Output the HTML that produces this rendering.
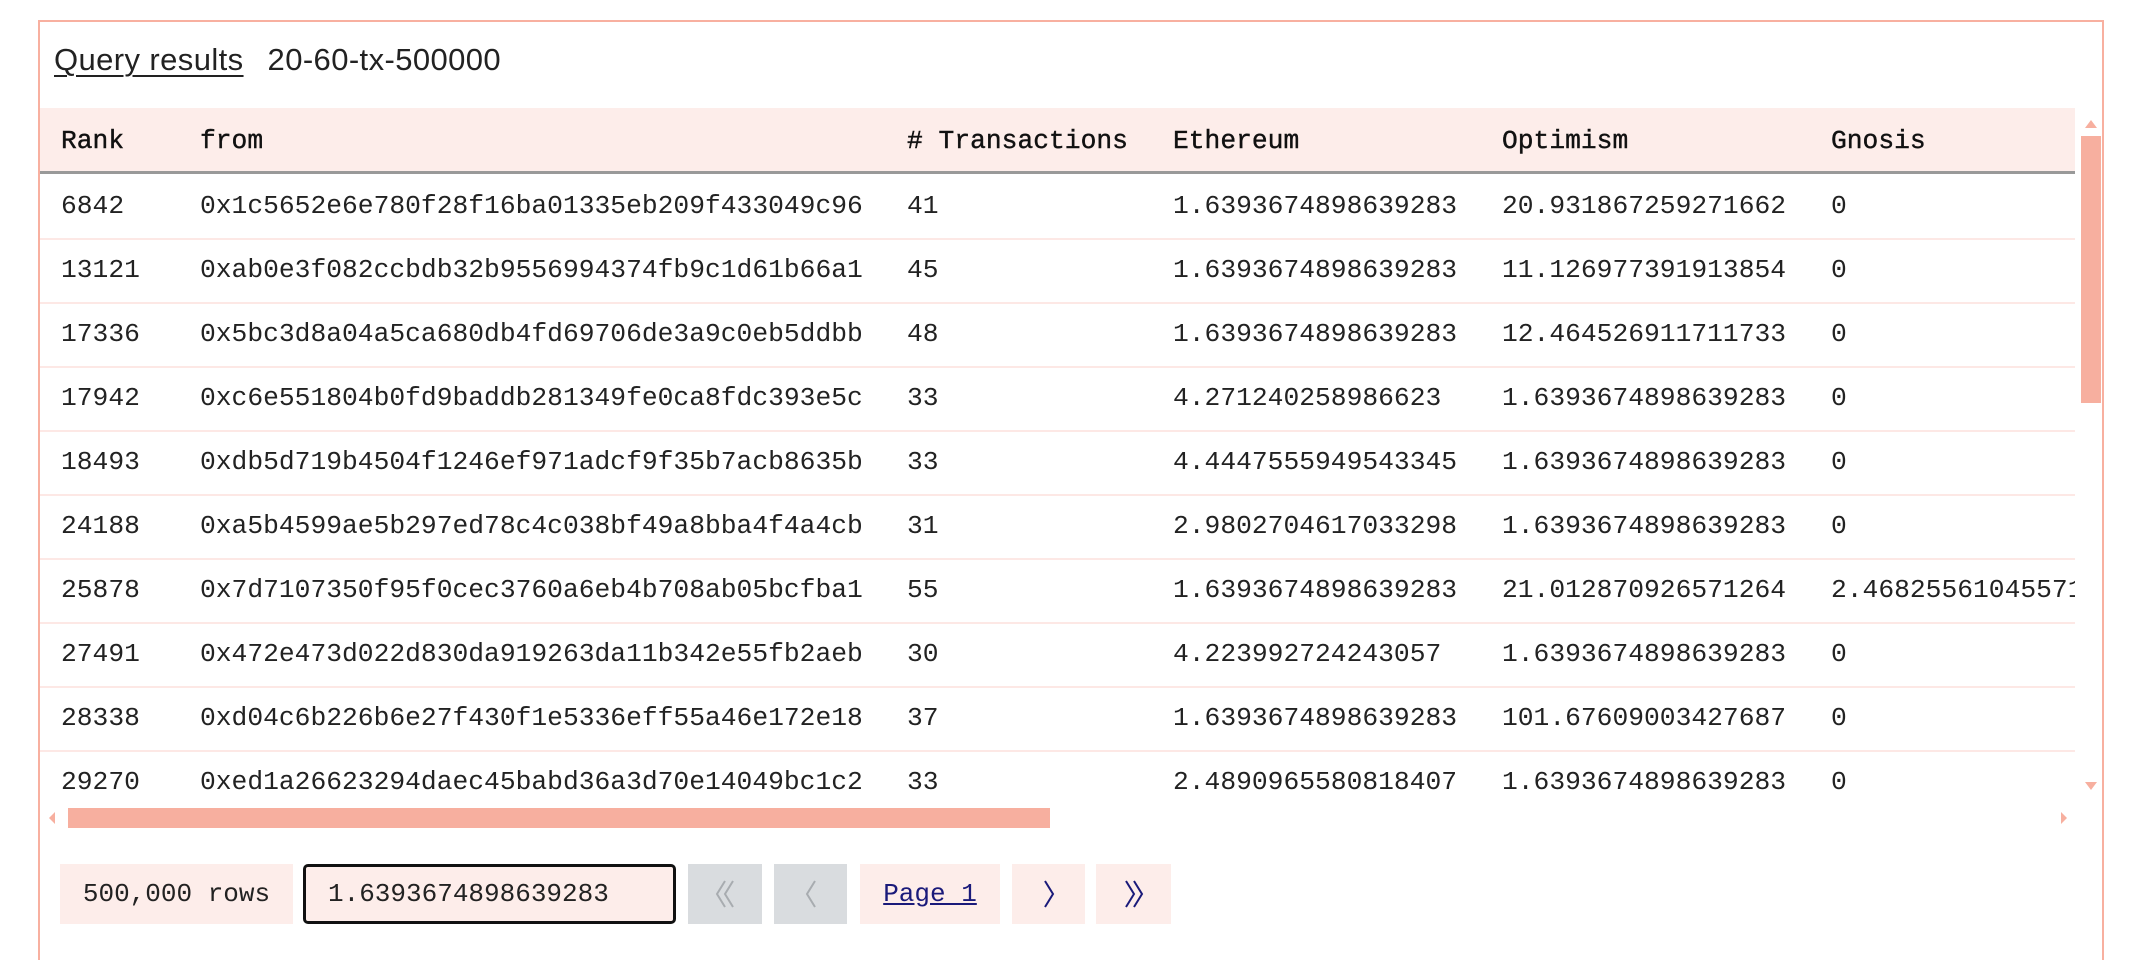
<!DOCTYPE html>
<html><head><meta charset="utf-8"><style>
*{margin:0;padding:0;box-sizing:border-box}
body{width:2129px;height:937px;background:#fff;position:relative;overflow:hidden;font-family:"Liberation Mono",monospace;color:#222}
.box{position:absolute;left:38px;top:20px;width:2066px;height:940px;border:2px solid #f8b0a0;border-bottom:none}
.title{position:absolute;left:54px;top:42px;font-family:"Liberation Sans",sans-serif;font-size:31px;color:#222;white-space:nowrap;letter-spacing:0.4px}
.title u{text-decoration-thickness:2px;text-underline-offset:5px;margin-right:24px}
.tbl{position:absolute;left:40px;top:108px;width:2035px;height:690px;overflow:hidden}
.hdr{position:absolute;left:0;top:0;width:2035px;height:66px;background:#fdedea;border-bottom:3px solid #999}
.row{position:absolute;left:0;width:2035px;height:64px;border-bottom:2px solid #fde8e5}
.c{position:absolute;font-size:26.3px;white-space:nowrap;line-height:64px;top:-2px}
.hdr .c{line-height:66px;top:0;color:#111;-webkit-text-stroke:0.4px #111}
.vs{position:absolute;left:2081px;top:136px;width:20px;height:267px;background:#f7af9f}
.hs{position:absolute;left:68px;top:808px;width:982px;height:20px;background:#f7af9f}
.tri{position:absolute;width:0;height:0}
.btn{position:absolute;top:864px;height:60px;background:#fdedea;font-size:26px;line-height:60px;text-align:center;color:#222}
.btn svg{position:absolute;left:50%;top:50%;transform:translate(-50%,-50%)}
</style></head><body>
<div class="box"></div>
<div class="title"><u>Query results</u>20-60-tx-500000</div>
<div class="tbl">
<div class="hdr">
<div class="c" style="left:21px">Rank</div><div class="c" style="left:160px">from</div><div class="c" style="left:867px"># Transactions</div><div class="c" style="left:1133px">Ethereum</div><div class="c" style="left:1462px">Optimism</div><div class="c" style="left:1791px">Gnosis</div>
</div>
<div class="row" style="top:68px"><div class="c" style="left:21px">6842</div><div class="c" style="left:160px">0x1c5652e6e780f28f16ba01335eb209f433049c96</div><div class="c" style="left:867px">41</div><div class="c" style="left:1133px">1.6393674898639283</div><div class="c" style="left:1462px">20.931867259271662</div><div class="c" style="left:1791px">0</div></div>
<div class="row" style="top:132px"><div class="c" style="left:21px">13121</div><div class="c" style="left:160px">0xab0e3f082ccbdb32b9556994374fb9c1d61b66a1</div><div class="c" style="left:867px">45</div><div class="c" style="left:1133px">1.6393674898639283</div><div class="c" style="left:1462px">11.126977391913854</div><div class="c" style="left:1791px">0</div></div>
<div class="row" style="top:196px"><div class="c" style="left:21px">17336</div><div class="c" style="left:160px">0x5bc3d8a04a5ca680db4fd69706de3a9c0eb5ddbb</div><div class="c" style="left:867px">48</div><div class="c" style="left:1133px">1.6393674898639283</div><div class="c" style="left:1462px">12.464526911711733</div><div class="c" style="left:1791px">0</div></div>
<div class="row" style="top:260px"><div class="c" style="left:21px">17942</div><div class="c" style="left:160px">0xc6e551804b0fd9baddb281349fe0ca8fdc393e5c</div><div class="c" style="left:867px">33</div><div class="c" style="left:1133px">4.271240258986623</div><div class="c" style="left:1462px">1.6393674898639283</div><div class="c" style="left:1791px">0</div></div>
<div class="row" style="top:324px"><div class="c" style="left:21px">18493</div><div class="c" style="left:160px">0xdb5d719b4504f1246ef971adcf9f35b7acb8635b</div><div class="c" style="left:867px">33</div><div class="c" style="left:1133px">4.4447555949543345</div><div class="c" style="left:1462px">1.6393674898639283</div><div class="c" style="left:1791px">0</div></div>
<div class="row" style="top:388px"><div class="c" style="left:21px">24188</div><div class="c" style="left:160px">0xa5b4599ae5b297ed78c4c038bf49a8bba4f4a4cb</div><div class="c" style="left:867px">31</div><div class="c" style="left:1133px">2.9802704617033298</div><div class="c" style="left:1462px">1.6393674898639283</div><div class="c" style="left:1791px">0</div></div>
<div class="row" style="top:452px"><div class="c" style="left:21px">25878</div><div class="c" style="left:160px">0x7d7107350f95f0cec3760a6eb4b708ab05bcfba1</div><div class="c" style="left:867px">55</div><div class="c" style="left:1133px">1.6393674898639283</div><div class="c" style="left:1462px">21.012870926571264</div><div class="c" style="left:1791px">2.468255610455718</div></div>
<div class="row" style="top:516px"><div class="c" style="left:21px">27491</div><div class="c" style="left:160px">0x472e473d022d830da919263da11b342e55fb2aeb</div><div class="c" style="left:867px">30</div><div class="c" style="left:1133px">4.223992724243057</div><div class="c" style="left:1462px">1.6393674898639283</div><div class="c" style="left:1791px">0</div></div>
<div class="row" style="top:580px"><div class="c" style="left:21px">28338</div><div class="c" style="left:160px">0xd04c6b226b6e27f430f1e5336eff55a46e172e18</div><div class="c" style="left:867px">37</div><div class="c" style="left:1133px">1.6393674898639283</div><div class="c" style="left:1462px">101.67609003427687</div><div class="c" style="left:1791px">0</div></div>
<div class="row" style="top:644px;border:none"><div class="c" style="left:21px">29270</div><div class="c" style="left:160px">0xed1a26623294daec45babd36a3d70e14049bc1c2</div><div class="c" style="left:867px">33</div><div class="c" style="left:1133px">2.4890965580818407</div><div class="c" style="left:1462px">1.6393674898639283</div><div class="c" style="left:1791px">0</div></div>
</div>
<div class="vs"></div>
<div class="tri" style="left:2085px;top:120px;border-left:6px solid transparent;border-right:6px solid transparent;border-bottom:8px solid #f7af9f"></div>
<div class="tri" style="left:2085px;top:782px;border-left:6px solid transparent;border-right:6px solid transparent;border-top:8px solid #f7af9f"></div>
<div class="hs"></div>
<div class="tri" style="left:49px;top:812px;border-top:6px solid transparent;border-bottom:6px solid transparent;border-right:6px solid #f7af9f"></div>
<div class="tri" style="left:2061px;top:812px;border-top:6px solid transparent;border-bottom:6px solid transparent;border-left:6px solid #f7af9f"></div>
<div class="btn" style="left:60px;width:233px">500,000 rows</div>
<div class="btn" style="left:303px;width:373px;border:3px solid #111;border-radius:5px;text-align:left;padding-left:22px;line-height:54px">1.6393674898639283</div>
<div class="btn" style="left:688px;width:74px;background:#d9dcdf"><svg width="24" height="30" viewBox="0 0 24 30"><path d="M12 2 L4 15 L12 28 M20 2 L12 15 L20 28" fill="none" stroke="#a8acb0" stroke-width="2"/></svg></div>
<div class="btn" style="left:774px;width:73px;background:#d9dcdf"><svg width="14" height="30" viewBox="0 0 14 30"><path d="M11 2 L3 15 L11 28" fill="none" stroke="#a8acb0" stroke-width="2"/></svg></div>
<div class="btn" style="left:860px;width:140px;color:#1a1a7a"><u>Page 1</u></div>
<div class="btn" style="left:1012px;width:73px"><svg width="14" height="30" viewBox="0 0 14 30"><path d="M3 2 L11 15 L3 28" fill="none" stroke="#1a1a7a" stroke-width="2"/></svg></div>
<div class="btn" style="left:1096px;width:75px"><svg width="24" height="30" viewBox="0 0 24 30"><path d="M4 2 L12 15 L4 28 M12 2 L20 15 L12 28" fill="none" stroke="#1a1a7a" stroke-width="2"/></svg></div>
</body></html>
